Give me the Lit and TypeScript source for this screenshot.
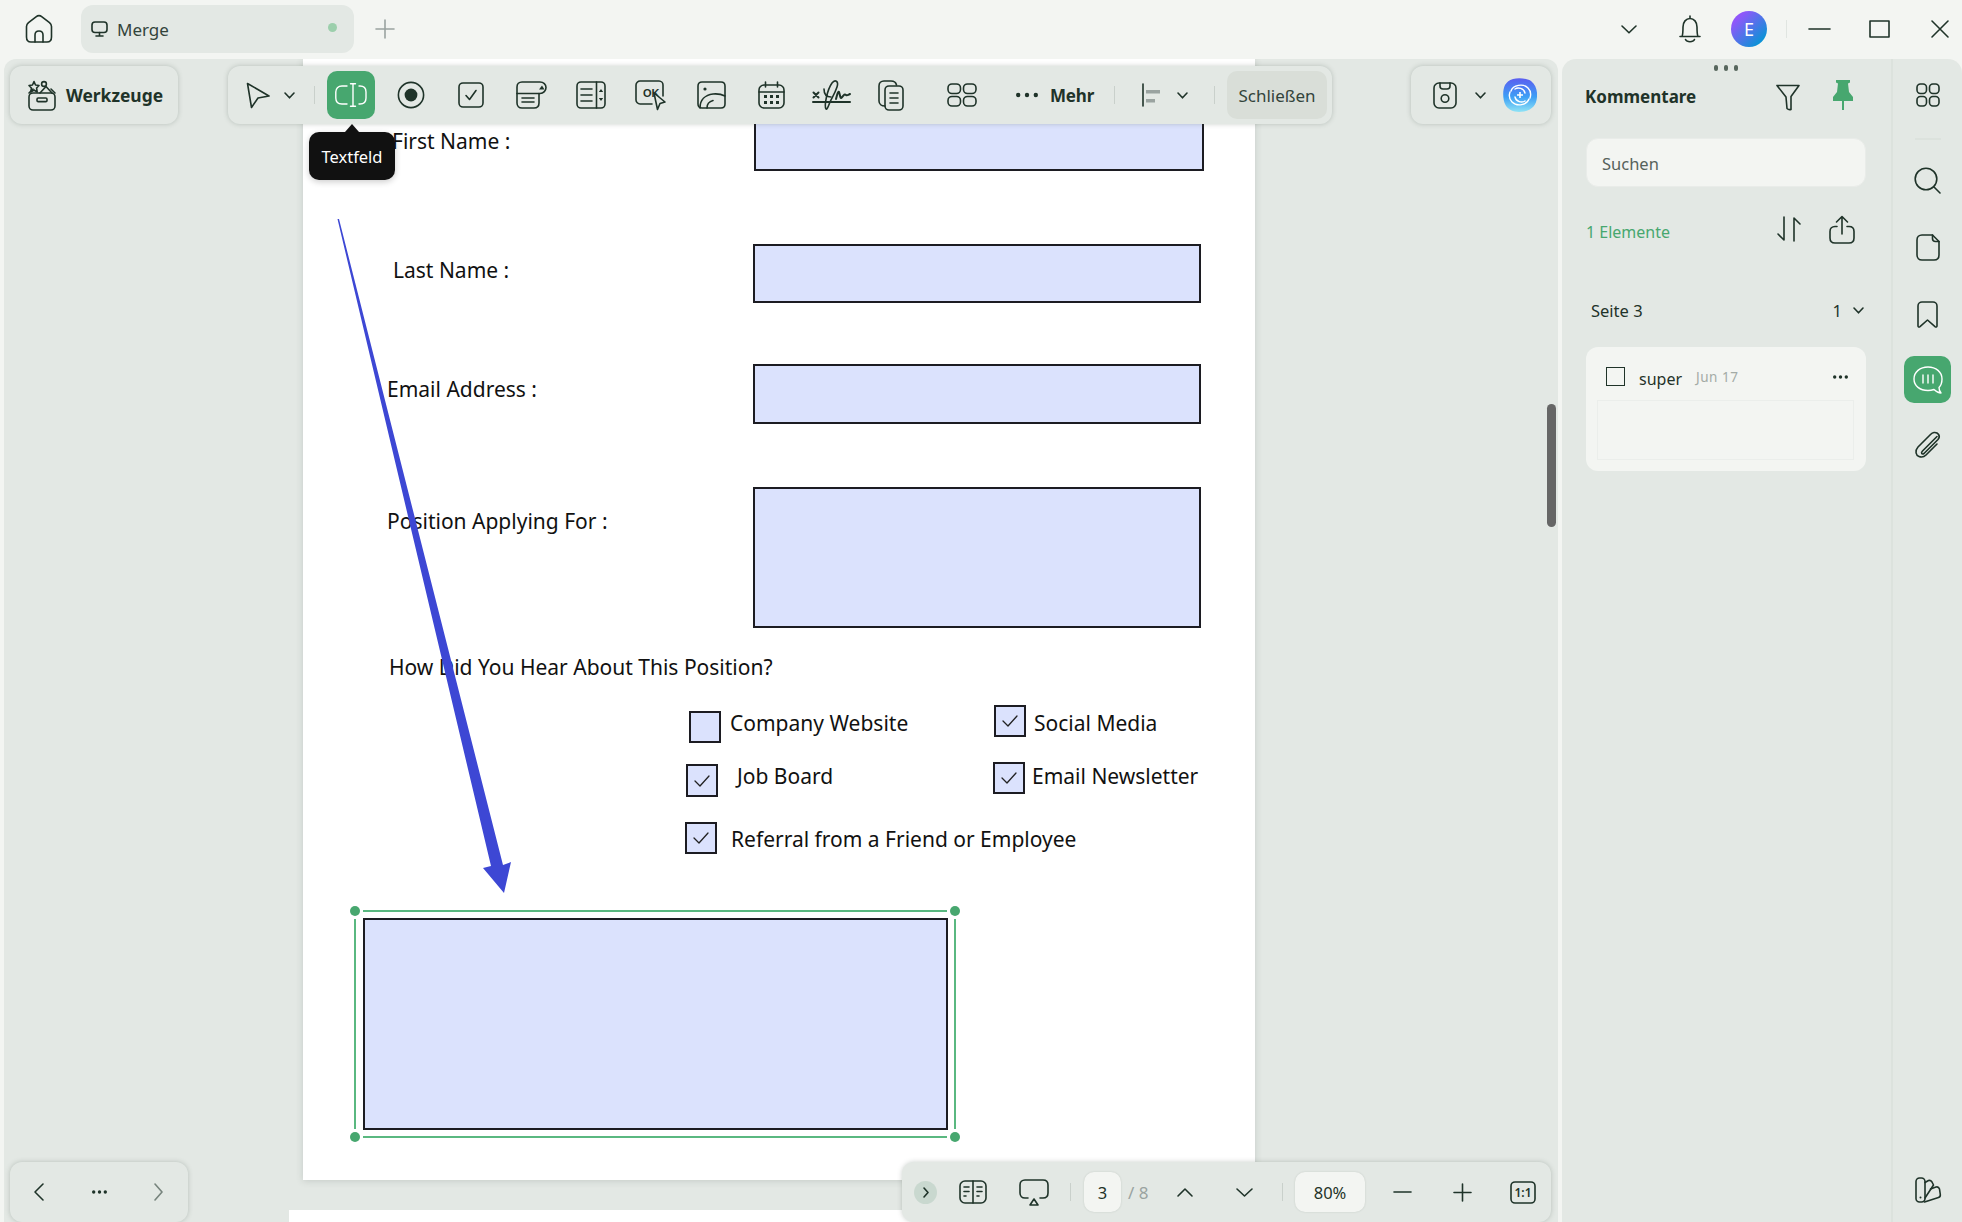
import { LitElement, html, css, svg } from "lit";
import { customElement } from "lit/decorators.js";

const ic = (w: number, h: number, body: unknown, cls = "") =>
  html`<svg class="ic ${cls}" width=${w} height=${h} viewBox="0 0 ${w} ${h}">${body}</svg>`;

const chev = (w = 11, h = 7) => ic(w, h, svg`<path d="M1 1 L${w / 2} ${h - 1.2} L${w - 1} 1"/>`);
const dots = (w = 22, r = 2.2) =>
  ic(w, 6, svg`<g class="solid"><circle cx=${r} cy="3" r=${r}/><circle cx=${w / 2} cy="3" r=${r}/><circle cx=${w - r} cy="3" r=${r}/></g>`);

const I = {
  home: ic(28, 28, svg`<path d="M1.5 11.5C1.5 9.8 2.3 8.8 3.5 7.7L11 1.8C13 .3 15 .3 17 1.8L24.5 7.7C25.7 8.8 26.5 9.8 26.5 11.5V22C26.5 25 24.7 27 22 27H6C3.3 27 1.5 25 1.5 22Z"/><path d="M10 27V20C10 17.5 11.6 16 14 16S18 17.5 18 20V27"/>`),
  monitor: ic(17, 16, svg`<rect x="1" y="1" width="15" height="10.5" rx="3"/><path d="M8.5 11.5V15M5 15H12"/>`),
  tools: ic(28, 31, svg`<rect x="1" y="13" width="26" height="17" rx="4"/><rect x="9" y="18" width="10" height="3.6" rx="1.2"/><path d="M1 13 5 9 M27 13 23 9"/><path d="M6 1.5 7.5 5 11 5.5 8.6 8 9.2 12 6 10 2.8 12 3.4 8 1 5.5 4.5 5Z"/><circle cx="16" cy="4" r="2.4"/><path d="M12 13 18 6.5 24 13"/>`),
  cursor: ic(24, 27, svg`<path d="M1.5 1.5 23 14 12 16 5.5 25.5Z"/>`),
  textfield: ic(32, 24, svg`<path d="M12 3H7C3 3 .8 5.5 .8 9V15C.8 18.5 3 21 7 21H12"/><path d="M24 3H25C29 3 31 5.5 31 9V15C31 18.5 29 21 25 21H24"/><path d="M18 .8V23.2M15.5 .8H20.5M15.5 23.2H20.5"/>`, "white"),
  radio: ic(28, 28, svg`<circle cx="14" cy="14" r="12.6"/><circle class="solid" cx="14" cy="14" r="6.4"/>`),
  check: ic(26, 26, svg`<rect x="1" y="1" width="24" height="24" rx="4"/><path d="M8 13.5 11.5 17.5 18 8.5"/>`),
  combo: ic(31, 28, svg`<path d="M1 6C1 3 3 1 6 1H24C27.5 1 30 3.5 30 6.5S27.5 12.5 24 12.5H23V22C23 25 21 27 18 27H6C3 27 1 25 1 22Z"/><path d="M1 12.5H23"/><path class="solid" d="M23 8.5 26 4.5 28.5 8.5Z"/><path d="M6 17H18M6 21H18"/>`),
  list: ic(30, 28, svg`<rect x="1" y="1" width="28" height="26" rx="4"/><path d="M20.5 1V27M5 8H16M5 14H16M5 20H16"/><path class="solid" d="M22.8 11 25 8 27.2 11ZM22.8 17 25 20 27.2 17Z"/>`),
  ok: html`<svg class="ic" width="32" height="31" viewBox="0 0 32 31"><path d="M17 24H5C3 24 1 22 1 20V5C1 3 3 1 5 1H24C26.5 1 28 3 28 5V16"/><text x="8" y="17" class="oktxt">OK</text><path class="bgf" d="M19 13 30 22 25 23.5 22.5 29.5Z"/></svg>`,
  image: ic(29, 28, svg`<path d="M5 1H24C26.5 1 28 2.5 28 5V23C28 25.5 26.5 27 24 27H5C2.5 27 1 25.5 1 23V5C1 2.5 2.5 1 5 1Z"/><circle class="solid" cx="8" cy="8" r="1.6"/><path d="M3 27C3 19 8 14 16 13 21 12.5 24 13 28 15"/><path d="M10 27C10 23 12 20.5 16 19.5"/>`),
  calendar: ic(27, 28, svg`<rect x="1" y="4" width="25" height="23" rx="5"/><path d="M1 11H26M7.5 1V6M19.5 1V6"/><g class="solid"><rect x="6" y="14" width="3" height="3"/><rect x="12" y="14" width="3" height="3"/><rect x="18" y="14" width="3" height="3"/><rect x="6" y="20" width="3" height="3"/><rect x="12" y="20" width="3" height="3"/><rect x="18" y="20" width="3" height="3"/></g>`),
  sign: ic(39, 31, svg`<path d="M1 22H38" stroke-width="2"/><path d="M1.5 12.5 6.5 17.5M6.5 12.5 1.5 17.5" stroke-width="2"/><path d="M14 29C12 26 15 10 20 3 23 -1 27 1 25 7 23 13 21 16 18 22 16 27 15 30 14 29Z"/><path d="M12 9C12 14 14 17 19 17"/><path d="M24 19C25 15 26 11 27 12 28 14 28 18 29 18 31 17 32 13 34 15 35 16 36 15 38 14" stroke-width="2"/>`),
  copy: ic(26, 31, svg`<path d="M7 26C3.5 26 1 24 1 21V6C1 3 3 1 6 1H13C15.5 1 18 2.5 18.5 5"/><rect x="7" y="6" width="18" height="24" rx="4"/><path d="M12 13H20M12 18H20M12 23H20"/>`),
  grid: ic(30, 24, svg`<rect x="1" y="1" width="12.5" height="9.5" rx="4"/><rect x="16.5" y="1" width="12.5" height="9.5" rx="4"/><rect x="1" y="13.5" width="12.5" height="9.5" rx="4"/><rect x="16.5" y="13.5" width="12.5" height="9.5" rx="4"/>`),
  gridS: ic(24, 24, svg`<rect x="1" y="1" width="9.5" height="9.5" rx="3.4"/><rect x="13.5" y="1" width="9.5" height="9.5" rx="3.4"/><rect x="1" y="13.5" width="9.5" height="9.5" rx="3.4"/><rect x="13.5" y="13.5" width="9.5" height="9.5" rx="3.4"/>`),
  align: html`<svg class="ic" width="18" height="22" viewBox="0 0 18 22"><path d="M1 0V22"/><rect class="gr" x="4" y="6" width="14" height="3.5"/><rect class="gr" x="4" y="15" width="9" height="3.5"/></svg>`,
  bell: ic(22, 28, svg`<path d="M11 1V3.5M1 21.5H21M3 21.5C4 19.5 4 17 4 12 4 7 7 3.5 11 3.5S18 7 18 12C18 17 18 19.5 19 21.5"/><path d="M6.5 24.5C8 27.5 14 27.5 15.5 24.5"/>`),
  minimize: ic(21, 2, svg`<path d="M0 1H21"/>`),
  maximize: ic(21, 18, svg`<rect x="1" y="1" width="19" height="16"/>`),
  close: ic(18, 18, svg`<path d="M1 1 17 17M17 1 1 17"/>`),
  save: ic(24, 27, svg`<rect x="1" y="1" width="22" height="25" rx="5"/><path d="M7 1V4C7 6 8 7 10 7H14C16 7 17 6 17 4V1"/><circle cx="12" cy="16.5" r="3.8"/>`),
  ai: html`<svg class="ai" width="34" height="34" viewBox="0 0 34 34"><defs><linearGradient id="aig" x1="0" y1="0" x2="0" y2="1"><stop offset="0" stop-color="#5b5df0"/><stop offset=".55" stop-color="#3d9ff5"/><stop offset="1" stop-color="#8fe3f5"/></linearGradient></defs><path d="M10 1C15 -.5 23 0 28 3 33 7 34.5 13 34 19 33.5 27 29 32 21 33.5 13 35 6 33 2.5 27 -.5 21 -.5 12 2 7 4 4 6 2 10 1Z" fill="url(#aig)"/><g fill="none" stroke="#fff" stroke-width="1.4" stroke-linecap="round"><path d="M8 13C10 7 20 5 25 10 28 13 28 17 27 20"/><path d="M26 21C24 27 14 29 9 24 6 21 6 17 7 14"/><path d="M12 11C15 9 21 10 22 15"/><path d="M22 23C19 25 13 24 12 19"/></g><path d="M17 14V20M14 17H20" stroke="#fff" stroke-width="1.6"/></svg>`,
  filter: ic(24, 27, svg`<path d="M1 1.5H23L15 12.5V25.5C13 26 11.5 25 11 24.5L10 13Z"/>`),
  pin: html`<svg width="20" height="30" viewBox="0 0 20 30"><path fill="#47a76f" d="M3 0H17V2.5L15 3.5 16 12 20 17V21H11V30H9V21H0V17L4 12 5 3.5 3 2.5Z"/></svg>`,
  sort: ic(24, 26, svg`<path d="M7 1V24L1 18M17 25V2L23 8"/>`),
  share: ic(26, 29, svg`<path d="M13 19V1.5M7.5 7 13 1.5 18.5 7"/><path d="M8 11.5H6C3 11.5 1 13.5 1 16.5V23C1 26 3 28 6 28H20C23 28 25 26 25 23V16.5C25 13.5 23 11.5 20 11.5H18"/>`),
  search: ic(27, 27, svg`<circle cx="12" cy="12" r="10.8"/><path d="M20 20 26 26"/>`),
  page: ic(24, 27, svg`<path d="M6 1H16.5L23 7.5V21C23 24 21 26 18 26H6C3 26 1 24 1 21V6C1 3 3 1 6 1Z"/><path d="M16.5 1V4.5C16.5 6.5 17.5 7.5 19.5 7.5H23"/>`),
  bookmark: ic(21, 27, svg`<path d="M1 5C1 2.5 3 1 5 1H16C18 1 20 2.5 20 5V25C20 26 19 26.4 18 25.6L10.5 19 3 25.6C2 26.4 1 26 1 25Z"/>`),
  comment: ic(30, 28, svg`<path d="M15 1C7 1 1 6 1 13S7 24.5 15 24.5C17.5 24.5 19.5 24 21 23.5 23 25.5 25 27 28 27 26.5 25 26 23 26 21.5 28 19.5 29 16.5 29 13 29 6 23 1 15 1Z"/><path d="M10 9V17M15 9V17M20 9V17"/>`, "white"),
  clip: ic(26, 27, svg`<path d="M22 5.5 7.5 20C5.5 22 7 24 9 22.5L23 8.5C26 5 23 1 19 1.5 17.5 1.8 16.5 2.5 15.5 3.5L3 16C-.5 20 1 24.5 4 25.5 6.5 26.5 9 26 11 24L22 13"/>`),
  palette: ic(26, 26, svg`<rect x="1" y="1" width="9" height="24" rx="3.5"/><path d="M10 5.5 13.5 3.5C15 3 16 3.5 17 5L18.5 8 10 21"/><path d="M15.5 12 21 10C23 9.5 24 10.5 24.5 12L25.3 17.5C25.5 19 25 20 23.5 20.5L9.5 25"/><circle class="solid" cx="5.5" cy="20.5" r="1"/>`),
  book: ic(28, 24, svg`<rect x="1" y="1" width="26" height="22" rx="5"/><path d="M14 1V23M5 7H10M5 11.5H10M5 16H7M18 7H23M18 11.5H23M18 16H20"/>`),
  present: ic(30, 27, svg`<path d="M9 19H6C3 19 1 17 1 14V6C1 3 3 1 6 1H24C27 1 29 3 29 6V14C29 17 27 19 24 19H21"/><path d="M15 20 19 26H11Z"/>`),
  oneone: html`<svg class="ic" width="26" height="23" viewBox="0 0 26 23"><rect x="1" y="1" width="24" height="21" rx="4"/><text x="13" y="15.5" class="ratio">1:1</text></svg>`,
  mark: ic(16, 12, svg`<path d="M1 6 6 11 15 1"/>`, "thin"),
};

type Box = { x: number; y: number; x2: number; y2: number; checked?: boolean; cls?: string };
const OX = 303, OY = 59;
const at = (x: number, y: number, w?: number, h?: number) =>
  `left:${x - OX}px;top:${y - OY}px;` + (w !== undefined ? `width:${w}px;height:${h}px;` : "");

const FIELDS: Box[] = [
  { x: 754, y: 110, x2: 1204, y2: 171 },
  { x: 753, y: 243.5, x2: 1201, y2: 303 },
  { x: 753, y: 364, x2: 1201, y2: 424 },
  { x: 753, y: 487, x2: 1201, y2: 628 },
  { x: 363, y: 918, x2: 948, y2: 1130 },
];
const BOXES: Box[] = [
  { x: 689, y: 711, x2: 721, y2: 743 },
  { x: 994, y: 705, x2: 1026, y2: 737, checked: true },
  { x: 686, y: 764, x2: 718, y2: 797, checked: true },
  { x: 993, y: 762, x2: 1025, y2: 794, checked: true },
  { x: 685, y: 822, x2: 717, y2: 854, checked: true },
];
const LABELS: { t: string; x: number; cy: number }[] = [
  { t: "First Name :", x: 392, cy: 141 },
  { t: "Last Name :", x: 393, cy: 270 },
  { t: "Email Address :", x: 387, cy: 389 },
  { t: "Position Applying For :", x: 387, cy: 521 },
  { t: "How Did You Hear About This Position?", x: 389, cy: 667 },
  { t: "Company Website", x: 730, cy: 723 },
  { t: "Social Media", x: 1034, cy: 723 },
  { t: "Job Board", x: 737, cy: 776 },
  { t: "Email Newsletter", x: 1032, cy: 776 },
  { t: "Referral from a Friend or Employee", x: 731, cy: 839 },
];
const HANDLES = [
  [355, 911],
  [955, 911],
  [355, 1137],
  [955, 1137],
];

@customElement("app-root")
export class AppRoot extends LitElement {
  static styles = css`
    :host {
      display: block;
      width: 1962px;
      height: 1222px;
      overflow: hidden;
      background: #f3f5f2;
      font-family: "Noto Sans", sans-serif;
      color: #1f3329;
    }
    .ic { fill: none; stroke: #1f3329; stroke-width: 1.6; stroke-linecap: round; stroke-linejoin: round; flex: none; display: block; overflow: visible; }
    .ic .solid { fill: #1f3329; stroke: none; }
    .ic.white { stroke: #fff; stroke-width: 1.4; }
    .ic.thin { stroke: #222; stroke-width: 1.3; }
    .ic .bgf { fill: #e3e8e4; }
    .ic .gr { fill: #9aa3a0; stroke: none; }
    .ic .oktxt { font: 700 11px "Liberation Sans Narrow", "Liberation Sans", sans-serif; fill: #1f3329; stroke: none; }
    .ic .ratio { font: 600 12px "Noto Sans", sans-serif; fill: #1f3329; stroke: none; text-anchor: middle; }
    .ai { flex: none; display: block; }

    .title { height: 59px; display: flex; align-items: center; padding: 0 13px 1px 25px; box-sizing: border-box; }
    .tab { margin-left: 28px; width: 273px; height: 48px; background: #e3e8e4; border-radius: 12px; display: flex; align-items: center; padding: 0 17px 0 10px; box-sizing: border-box; font-size: 17px; color: #33443b; }
    .tab span { margin-left: 9px; flex: 1; margin-top: 1px; }
    .tab i { width: 9px; height: 9px; border-radius: 50%; background: #9ccfac; margin-bottom: 4px; }
    .plus { margin-left: 22px; width: 18px; height: 18px; position: relative; }
    .plus svg { stroke: #9aa3a0; }
    .spacer { flex: 1; }
    .avatar { margin-left: 30px; width: 36px; height: 36px; border-radius: 50%; background: linear-gradient(135deg, #8f57fa 20%, #0a93d6 85%); color: #fff; font-size: 18px; display: flex; align-items: center; justify-content: center; }
    .tsep { margin-left: 19px; width: 1px; height: 18px; background: #e0e5e1; }

    .main { display: flex; height: 1163px; }
    .canvas { position: relative; margin-left: 4px; width: 1554px; background: #e3e8e4; border-radius: 12px 12px 0 0; overflow: hidden; }
    .page { position: relative; margin-left: 299px; width: 952px; height: 1121px; background: #fff; box-shadow: 0 1px 7px rgba(60, 70, 65, 0.18); }
    .nextpage { margin-left: 285px; margin-top: 30px; width: 980px; height: 60px; background: #fff; }
    .field { position: absolute; box-sizing: border-box; background: #dbe2fd; border: 2px solid #1c1c22; }
    .field.small { display: flex; align-items: center; justify-content: center; }
    .label { position: absolute; font-size: 21px; line-height: 30px; color: #111; white-space: nowrap; font-family: "Noto Sans", sans-serif; }
    .ink { position: absolute; left: 0; top: 0; pointer-events: none; }

    .topbar { position: absolute; left: 0; right: 0; top: 7px; display: flex; }
    .card { background: #e3e8e4; border-radius: 12px; box-shadow: 0 0 5px rgba(70, 85, 75, 0.28); height: 58px; box-sizing: border-box; display: flex; align-items: center; flex: none; }
    .tools { margin-left: 6px; width: 168px; padding-left: 18px; gap: 10px; font-weight: 700; font-size: 17.4px; }
    .strip { margin-left: 50px; width: 1104px; padding: 0 5px 0 18px; }
    .chevA { margin-left: 14px; }
    .sep { width: 1px; height: 18px; background: #c9d0cb; flex: none; }
    .slot { width: 60px; height: 48px; display: flex; align-items: center; justify-content: center; flex: none; }
    .green { width: 48px; height: 48px; background: #47a76f; border-radius: 10px; display: flex; align-items: center; justify-content: center; flex: none; }
    .more { margin-left: 12px; font-weight: 700; font-size: 17px; width: 44px; letter-spacing: -0.2px; }
    .closeb { margin-left: 12px; width: 100px; height: 48px; border-radius: 10px; background: #d9ded8; display: flex; align-items: center; justify-content: center; font-size: 17px; color: #33443b; padding-top: 1px; box-sizing: border-box; }
    .savebar { margin-left: 79px; width: 140px; padding-left: 22px; }

    .tip { position: absolute; left: 305px; top: 73px; width: 86px; height: 48px; background: #111; color: #fff; border-radius: 10px; display: flex; align-items: center; justify-content: center; font-size: 16.5px; box-shadow: 0 2px 6px rgba(0, 0, 0, 0.2); padding-top: 1px; box-sizing: border-box; }
    .tip::before { content: ""; position: absolute; left: 36px; top: -8px; border: 7px solid transparent; border-top: 0; border-bottom: 8px solid #111; }

    .scroll { position: absolute; left: 1543px; top: 345px; width: 9px; height: 123px; border-radius: 5px; background: #666; }

    .botbar { position: absolute; left: 0; right: 0; bottom: 0; display: flex; }
    .nav { margin-left: 6px; width: 178px; height: 60px; padding: 0 25px 0 24px; justify-content: space-between; }
    .gchev { opacity: 0.55; }
    .pager { margin-left: 714px; width: 649px; height: 60px; padding-left: 12px; }
    .round { width: 23px; height: 23px; border-radius: 50%; background: #c9d8cf; display: flex; align-items: center; justify-content: center; flex: none; }
    .num { height: 40px; background: #f3f5f2; border-radius: 10px; display: flex; align-items: center; justify-content: center; font-size: 16.5px; flex: none; box-shadow: 0 0 2px rgba(70, 85, 75, 0.2); }
    .total { margin-left: 7px; width: 22px; color: #9aa3a0; font-size: 17px; white-space: nowrap; }

    .panel { margin-left: 4px; flex: 1; display: flex; background: #e3e8e4; border-radius: 14px 14px 0 0; }
    .col { width: 329px; box-sizing: border-box; padding: 6px 25px 0 24px; flex: none; }
    .handle { display: flex; justify-content: center; gap: 6px; height: 6px; padding-right: 0; }
    .handle i { width: 4px; height: 6px; border-radius: 2px; background: #57665d; }
    .phead { margin-top: 9px; height: 34px; display: flex; align-items: center; font-weight: 700; font-size: 17px; }
    .phead span { flex: 1; margin-bottom: 2px; margin-left: -1px; }
    .phead .pinwrap { margin-left: 33px; margin-right: 13px; }
    .searchbox { margin-top: 24px; height: 49px; box-sizing: border-box; background: #f3f5f2; border-radius: 12px; border: 1px solid #e9ece9; padding: 1px 0 0 15px; display: flex; align-items: center; font-size: 16.5px; color: #56625b; }
    .count { margin-top: 28px; height: 28px; display: flex; align-items: center; color: #47a76f; font-size: 16px; }
    .count span { flex: 1; margin-top: 5px; }
    .count .right { margin-left: 28px; margin-right: 11px; }
    .pagerow { margin-top: 55px; height: 24px; display: flex; align-items: center; font-size: 16.5px; padding-left: 5px; padding-right: 2px; }
    .pagerow span { flex: 1; }
    .pagerow b { font-weight: 400; margin-right: 11px; }
    .ccard { margin-top: 25px; height: 124px; background: #f3f5f2; border-radius: 12px; box-sizing: border-box; padding: 20px 12px 13px 11px; }
    .crow { display: flex; align-items: center; height: 19px; padding: 0 6px 0 9px; }
    .cb { width: 19px; height: 19px; box-sizing: border-box; border: 1.6px solid #1f3329; flex: none; }
    .crow .who { margin-left: 14px; font-size: 16px; margin-top: 4px; }
    .crow .when { margin-left: 14px; font-size: 13.5px; color: #a3aba6; margin-top: 1px; flex: 1; letter-spacing: 0.5px; }
    .cbody { margin-top: 14px; height: 58px; border: 1px solid #ebeeeb; }

    .rail { flex: 1; border-left: 2px solid #dce2dd; display: flex; flex-direction: column; align-items: center; padding-bottom: 19px; }
    .rail > * { flex: none; }
    .rsep { width: 26px; height: 2px; background: #dce2dd; }
    .cbtn { width: 47px; height: 47px; border-radius: 10px; background: #47a76f; display: flex; align-items: center; justify-content: center; }
  `;

  private m(px: number) {
    return `margin-left:${px}px`;
  }
  private mt(px: number) {
    return `margin-top:${px}px`;
  }

  render() {
    const slots = [I.radio, I.check, I.combo, I.list, I.ok, I.image, I.calendar, I.sign, I.copy];
    return html`
      <div class="title">
        ${I.home}
        <div class="tab">${I.monitor}<span>Merge</span><i></i></div>
        <div class="plus">${ic(18, 18, svg`<path d="M9 0V18M0 9H18"/>`)}</div>
        <div class="spacer"></div>
        ${chev(16, 9)}
        <div style=${this.m(42)}>${I.bell}</div>
        <div class="avatar">E</div>
        <div class="tsep"></div>
        <div style=${this.m(22)}>${I.minimize}</div>
        <div style=${this.m(39)}>${I.maximize}</div>
        <div style=${this.m(41)}>${I.close}</div>
      </div>
      <div class="main">
        <div class="canvas">
          <div class="page">
            ${FIELDS.map((f) => html`<div class="field" style=${at(f.x, f.y, f.x2 - f.x, f.y2 - f.y)}></div>`)}
            ${BOXES.map(
              (b) => html`<div class="field small" style=${at(b.x, b.y, b.x2 - b.x, b.y2 - b.y)}>${b.checked ? I.mark : ""}</div>`
            )}
            ${LABELS.map((l) => html`<div class="label" style=${at(l.x, l.cy - 15)}>${l.t}</div>`)}
            <svg class="ink" width="952" height="1121" viewBox="${OX} ${OY} 952 1121">
              <polygon fill="#3d47d4" points="337.5,219 491,866 483,868 504,893 511,862 503,865 339,219" />
              <g stroke="#5ab880" stroke-width="2" fill="none">
                <path d="M363 911H947M363 1137H947M355 919V1129M955 919V1129" />
              </g>
              ${HANDLES.map((h) => svg`<circle cx=${h[0]} cy=${h[1]} r="5" fill="#47a76f"/>`)}
            </svg>
          </div>
          <div class="nextpage"></div>

          <div class="topbar">
            <div class="card tools">${I.tools}<span>Werkzeuge</span></div>
            <div class="card strip">
              ${I.cursor}
              <div class="chevA">${chev()}</div>
              <div class="sep" style=${this.m(19)}></div>
              <div class="green" style=${this.m(12)}>${I.textfield}</div>
              <div style="width:6px"></div>
              ${slots.map((s) => html`<div class="slot">${s}</div>`)}
              <div class="slot" style=${this.m(11)}>${I.grid}</div>
              <div style=${this.m(24)}>${dots()}</div>
              <div class="more">Mehr</div>
              <div class="sep" style=${this.m(20)}></div>
              <div style=${this.m(27)}>${I.align}</div>
              <div style=${this.m(17)}>${chev()}</div>
              <div class="sep" style=${this.m(26)}></div>
              <div class="closeb">Schließen</div>
            </div>
            <div class="card savebar">
              ${I.save}
              <div style=${this.m(18)}>${chev()}</div>
              <div style=${this.m(17)}>${I.ai}</div>
            </div>
          </div>
          <div class="tip">Textfeld</div>
          <div class="scroll"></div>

          <div class="botbar">
            <div class="card nav">
              ${ic(10, 18, svg`<path d="M9 1 1 9 9 17"/>`)} ${dots(15, 1.7)}
              <div class="gchev">${ic(9, 18, svg`<path d="M1 1 8 9 1 17"/>`)}</div>
            </div>
            <div class="card pager">
              <div class="round">${ic(6, 11, svg`<path d="M1 1 5 5.5 1 10"/>`)}</div>
              <div style=${this.m(22)}>${I.book}</div>
              <div style=${this.m(32)}>${I.present}</div>
              <div class="sep" style=${this.m(21)}></div>
              <div class="num" style="margin-left:13px;width:37px">3</div>
              <div class="total">/ 8</div>
              <div style=${this.m(27)}>${ic(16, 9, svg`<path d="M1 8 8 1 15 8"/>`)}</div>
              <div style=${this.m(43)}>${ic(17, 9, svg`<path d="M1 1 8.5 8 16 1"/>`)}</div>
              <div class="sep" style=${this.m(29)}></div>
              <div class="num" style="margin-left:12px;width:70px">80%</div>
              <div style=${this.m(29)}>${ic(17, 2, svg`<path d="M0 1H17"/>`)}</div>
              <div style=${this.m(43)}>${ic(17, 17, svg`<path d="M0 8.5H17M8.5 0V17"/>`)}</div>
              <div style=${this.m(39)}>${I.oneone}</div>
            </div>
          </div>
        </div>

        <div class="panel">
          <div class="col">
            <div class="handle"><i></i><i></i><i></i></div>
            <div class="phead">
              <span>Kommentare</span>
              ${I.filter}
              <div class="pinwrap">${I.pin}</div>
            </div>
            <div class="searchbox">Suchen</div>
            <div class="count">
              <span>1 Elemente</span>
              ${I.sort}
              <div class="right">${I.share}</div>
            </div>
            <div class="pagerow"><span>Seite 3</span><b>1</b>${chev()}</div>
            <div class="ccard">
              <div class="crow">
                <div class="cb"></div>
                <div class="who">super</div>
                <div class="when">Jun 17</div>
                ${dots(15, 1.7)}
              </div>
              <div class="cbody"></div>
            </div>
          </div>
          <div class="rail">
            <div style=${this.mt(24)}>${I.gridS}</div>
            <div class="rsep" style=${this.mt(31)}></div>
            <div style=${this.mt(27)}>${I.search}</div>
            <div style=${this.mt(40)}>${I.page}</div>
            <div style=${this.mt(40)}>${I.bookmark}</div>
            <div class="cbtn" style=${this.mt(28)}>${I.comment}</div>
            <div style=${this.mt(28)}>${I.clip}</div>
            <div style="margin-top:auto">${I.palette}</div>
          </div>
        </div>
      </div>
    `;
  }
}
